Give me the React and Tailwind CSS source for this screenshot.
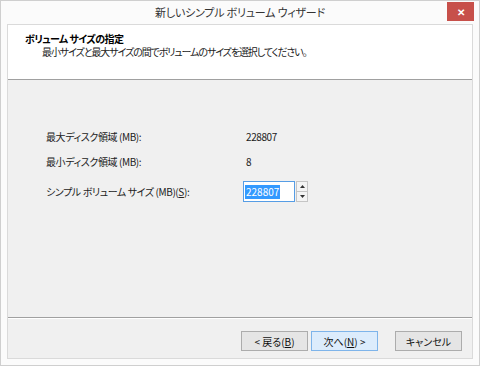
import React from "react";

const font = {
  fontFamily: '"Noto Sans CJK JP", "Noto Sans", sans-serif',
};

function Row({ label, children }) {
  return (
    <div className="flex items-center h-[25px]">
      <div className="w-[200px]">{label}</div>
      <div>{children}</div>
    </div>
  );
}

function Button({ children, active }) {
  return (
    <div
      className={
        active
          ? "w-[67px] h-[20px] flex items-center justify-center border border-[#7eb4ea] bg-[#dcecfc] text-[#111] tracking-normal"
          : "w-[67px] h-[20px] flex items-center justify-center border border-[#acacac] bg-[#e5e5e5] text-[#111] tracking-normal"
      }
    >
      {children}
    </div>
  );
}

export default function App() {
  return (
    <div
      className="w-[480px] h-[366px] bg-[#fbfbfb] border border-[#cfcfcf] flex flex-col text-[10px] tracking-[-0.4px] text-[#222] [font-feature-settings:'palt']"
      style={font}
    >
      {/* title bar */}
      <div className="relative h-[23px] flex items-center justify-center text-[11px] tracking-[-0.2px] text-[#333]">
        新しいシンプル ボリューム ウィザード
        <div className="absolute right-[5px] top-[1px] w-[27px] h-[19px] bg-[#c7504a] flex items-center justify-center text-white text-[10px] font-bold leading-none">
          ✕
        </div>
      </div>

      {/* client area */}
      <div className="flex-1 mx-[6px] mb-[6px] border border-[#dadada] flex flex-col">
        <div className="h-[55px] bg-white border-b border-[#a0a0a0] pl-[17px] pt-[8px] flex flex-col gap-[1px]">
          <div className="font-bold text-black tracking-[-0.6px] leading-[12px]">ボリューム サイズの指定</div>
          <div className="pl-[17px] tracking-[-1.1px] leading-[12px]">
            最小サイズと最大サイズの間でボリュームのサイズを選択してください。
          </div>
        </div>

        <div className="flex-1 bg-[#f0f0f0] pl-[38px] pt-[44px] border-b border-[#a0a0a0]">
          <Row label="最大ディスク領域 (MB):">228807</Row>
          <Row label="最小ディスク領域 (MB):">8</Row>
          <div className="flex items-center h-[33px] pt-[2px]">
            <div className="w-[197px]">
              シンプル ボリューム サイズ (MB)(<span className="underline">S</span>):
            </div>
            <div className="flex items-stretch h-[21px]">
              <div className="w-[52px] bg-white border border-[#569de5] flex items-center pl-[1px]">
                <span className="bg-[#3399ff] text-white px-[1px] leading-[14px] tracking-normal">228807</span>
              </div>
              <div className="w-[12px] ml-[1px] flex flex-col border border-[#c5c5c5] bg-[#f4f4f4]">
                <div className="flex-1 flex items-center justify-center border-b border-[#c5c5c5]">
                  <svg width="5" height="3" viewBox="0 0 5 3"><path d="M0 3 L2.5 0 L5 3 Z" fill="#333" /></svg>
                </div>
                <div className="flex-1 flex items-center justify-center">
                  <svg width="5" height="3" viewBox="0 0 5 3"><path d="M0 0 L2.5 3 L5 0 Z" fill="#333" /></svg>
                </div>
              </div>
            </div>
          </div>
        </div>

        <div className="h-[40px] bg-[#f0f0f0] border-t border-white flex items-start justify-end pr-[10px] pt-[12px] gap-[3px]">
          <Button>
            &lt; 戻る(<span className="underline">B</span>)
          </Button>
          <Button active>
            次へ(<span className="underline">N</span>) &gt;
          </Button>
          <div className="w-[11px]" />
          <Button>キャンセル</Button>
        </div>
      </div>
    </div>
  );
}
